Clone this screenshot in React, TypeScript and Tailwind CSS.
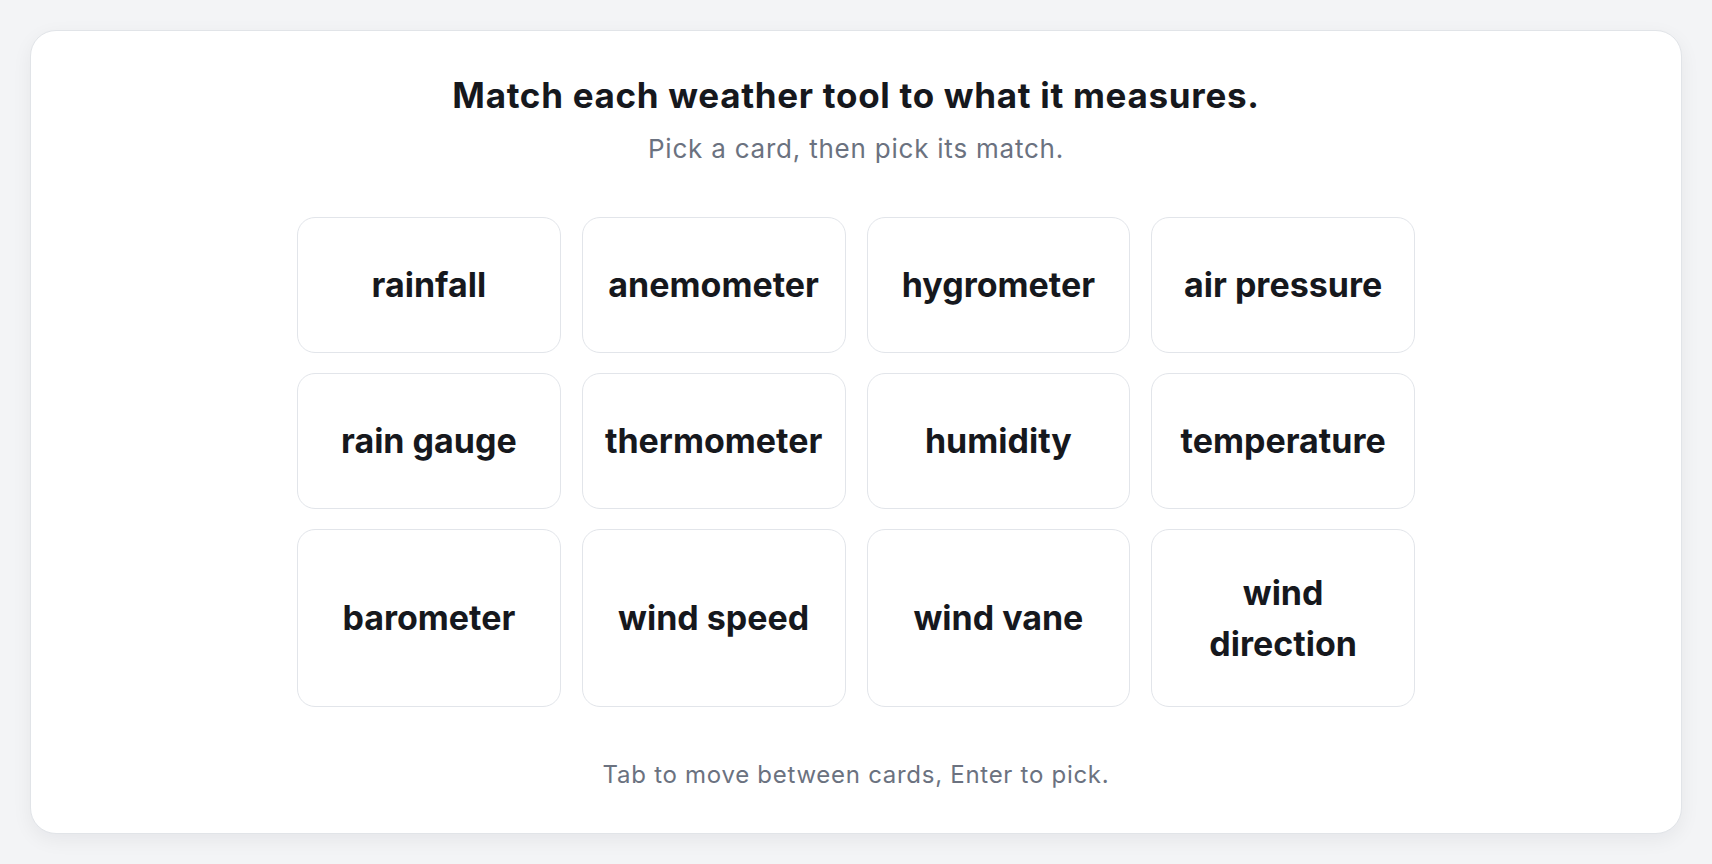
import React from "react";

const items = [
  "rainfall",
  "anemometer",
  "hygrometer",
  "air pressure",
  "rain gauge",
  "thermometer",
  "humidity",
  "temperature",
  "barometer",
  "wind speed",
  "wind vane",
  "wind direction",
];

export default function App() {
  return (
    <div
      className="h-screen w-full bg-[#f3f4f6] p-[30px]"
      style={{ fontFamily: "Inter, 'Noto Sans', sans-serif" }}
    >
      <div className="flex h-full w-full flex-col items-center justify-center rounded-[26px] border border-[#e1e4e8] bg-white shadow-[0_6px_20px_rgba(15,23,42,0.06)]">
        <h1 className="text-[35px] font-bold leading-[1.3] tracking-[0.02em] text-[#16181d]">
          Match each weather tool to what it measures.
        </h1>
        <p className="mt-[13px] text-[26px] leading-[1.4] tracking-[0.03em] text-[#6b7280]">
          Pick a card, then pick its match.
        </p>
        <div className="mt-[49px] grid w-[1118px] grid-cols-4 gap-x-[21px] gap-y-[20px]">
          {items.map((t) => (
            <button
              key={t}
              className="flex min-h-[136px] items-center justify-center rounded-[18px] border-[1.5px] border-[#e2e5ea] bg-white px-6 py-[37px] text-center text-[34px] font-bold leading-[1.5] text-[#16181d]"
            >
              {t === "wind direction" ? (
                <span>
                  wind
                  <br />
                  direction
                </span>
              ) : (
                t
              )}
            </button>
          ))}
        </div>
        <p className="mt-[51px] text-[24px] leading-[1.4] tracking-[0.03em] text-[#6b7280]">
          Tab to move between cards, Enter to pick.
        </p>
      </div>
    </div>
  );
}
